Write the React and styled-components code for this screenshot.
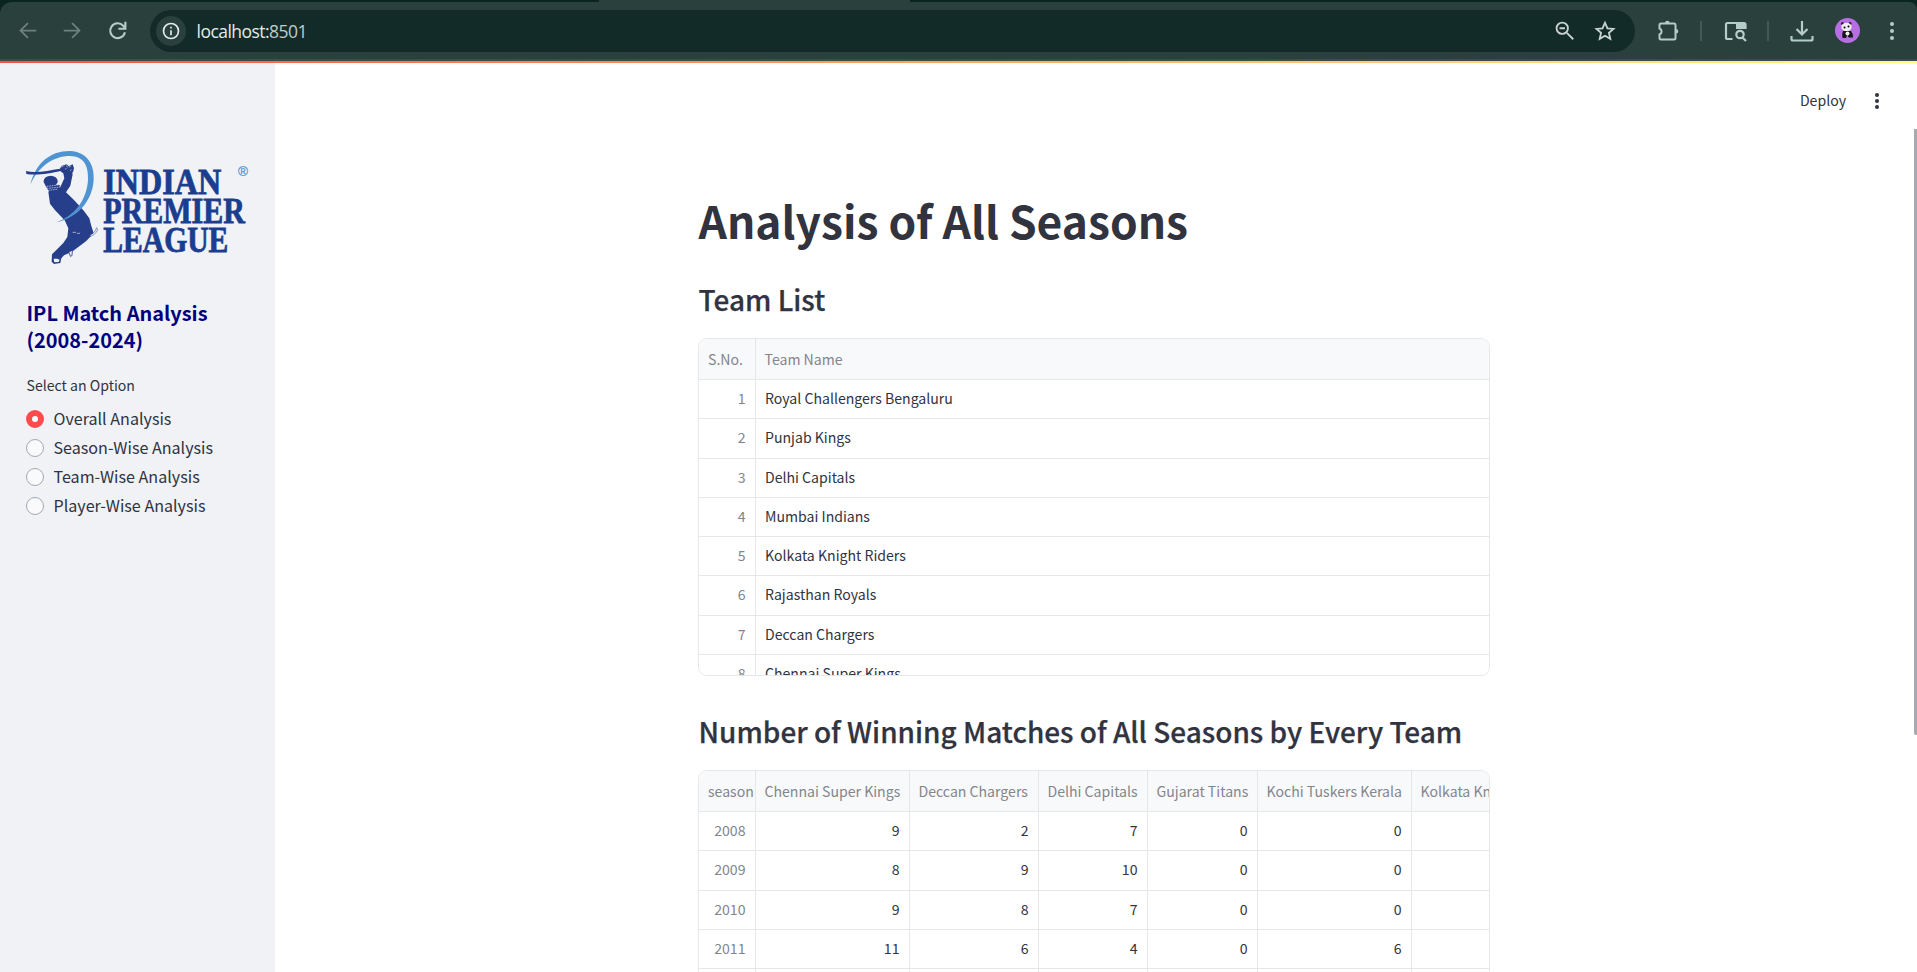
import React from "react";
import styled, { createGlobalStyle } from "styled-components";

const Global = createGlobalStyle`
  * { box-sizing: border-box; }
  html, body { margin: 0; padding: 0; overflow: hidden; background: #fff; }
  body { font-family: "Noto Sans CJK SC", "Noto Sans", sans-serif; color: #31333f; }
`;

const Window = styled.div`
  display: flex;
  flex-direction: column;
  width: 1917px;
  height: 972px;
  overflow: hidden;
`;

const BrowserChrome = styled.header`
  flex: none;
  height: 61px;
  background: #0a2520;
  display: flex;
  flex-direction: column;
  align-items: flex-start;
`;
const ActiveTab = styled.div`
  width: 311px;
  height: 2px;
  margin-left: 599px;
  background: #29403c;
`;
const Toolbar = styled.div`
  width: 100%;
  height: 59px;
  background: #29403c;
  border-bottom: 2px solid #3d4d49;
  border-radius: 12px 8px 0 0;
  display: flex;
  align-items: center;
  padding: 0 17px 0 17px;
`;
const NavButtons = styled.div`
  display: flex;
  gap: 24px;
  width: 133px;
  height: 42px;
  align-items: center;
`;
const AddressBar = styled.div`
  width: 1485px;
  height: 42px;
  border-radius: 21px;
  background: #122b28;
  display: flex;
  align-items: center;
  padding: 0 19px 0 6px;
`;
const SiteInfo = styled.div`
  width: 30px;
  height: 30px;
  border-radius: 50%;
  background: #29403c;
  display: grid;
  place-items: center;
`;
const Url = styled.span`
  flex: 1;
  margin-left: 10.5px;
  font: 400 17.5px/24px "Open Sans", sans-serif;
  letter-spacing: -0.53px;
  color: #e3eae7;
  & > em { font-style: normal; color: #c0cdc9; }
`;
const AddressActions = styled.div`
  display: flex;
  gap: 18px;
`;
const Extensions = styled.div`
  flex: 1;
  display: flex;
  align-items: center;
  padding-left: 21px;
`;
const Divider = styled.i`
  width: 2px;
  height: 20px;
  background: #425a55;
  margin: 0 21px 0 20px;
`;
const Avatar = styled.div`
  width: 25px;
  height: 25px;
  border-radius: 50%;
  background: #b66ee3;
  overflow: hidden;
  margin: 0 29.5px 0 20.5px;
  flex: none;
`;

const Decoration = styled.div`
  flex: none;
  height: 2px;
  background: linear-gradient(90deg, #ff4b4b, #fffd80);
`;

const AppBody = styled.div`
  flex: 1;
  display: flex;
  min-height: 0;
`;

const Sidebar = styled.aside`
  flex: none;
  width: 275px;
  background: #f0f2f6;
  padding: 86px 20px 0 26px;
`;
const SidebarTitle = styled.h3`
  margin: 34px 0 0 0.5px;
  font-size: 19.95px;
  line-height: 27px;
  font-weight: 700;
  color: #000080;
`;
const FieldLabel = styled.div`
  margin: 21px 0 0 0.5px;
  font-size: 14.1px;
  line-height: 22px;
`;
const RadioGroup = styled.div`
  display: flex;
  flex-direction: column;
  margin-top: 8.4px;
`;
const RadioRow = styled.label`
  display: flex;
  align-items: center;
  gap: 9.5px;
  height: 28.9px;
  font-size: 16.1px;
  line-height: 28px;
  white-space: nowrap;
`;
const RadioText = styled.span`
  padding-bottom: 1px;
`;
const RadioDot = styled.span`
  width: 18px;
  height: 18px;
  border-radius: 50%;
  background: ${(p) => (p.$on ? "#fff" : "#fafafc")};
  border: ${(p) => (p.$on ? "6px solid #ff4b4b" : "1px solid #a3a8b0")};
`;

const Main = styled.main`
  flex: 1;
  display: flex;
  flex-direction: column;
  min-width: 0;
`;
const AppHeader = styled.div`
  flex: none;
  height: 66px;
  display: flex;
  justify-content: flex-end;
  align-items: center;
  gap: 21px;
  padding: 9px 30px 0 0;
  font-size: 14.1px;
`;
const DeployLabel = styled.span`
  padding-bottom: 2px;
`;
const ScrollRow = styled.div`
  flex: 1;
  min-height: 0;
  display: flex;
  justify-content: space-between;
`;
const Content = styled.div`
  width: 792px;
  margin-left: 423px;
  padding-top: 59px;
`;
const ScrollThumb = styled.div`
  width: 3px;
  height: 606px;
  background: #a9aab0;
  border-bottom-left-radius: 2px;
`;
const PageTitle = styled.h1`
  margin: 0 0 0 0.5px;
  font-size: 44.35px;
  line-height: 64px;
  font-weight: 700;
  white-space: nowrap;
`;
const SectionTitle = styled.h2`
  margin: ${(p) => p.$top}px 0 0 0.6px;
  font-size: 27.97px;
  line-height: 40px;
  font-weight: 500;
  -webkit-text-stroke: 0.25px #31333f;
  white-space: nowrap;
`;
const Frame = styled.div`
  margin-top: ${(p) => p.$top}px;
  height: 338px;
  border: 1px solid #e6e7e9;
  border-radius: 9px;
  overflow: hidden;
  font-size: 14.1px;
`;
const GridRow = styled.div`
  display: grid;
  grid-template-columns: ${(p) => p.$cols};
  height: ${(p) => (p.$head ? "41px" : "39.27px")};
  background: ${(p) => (p.$head ? "#f8f9fb" : "#fff")};
  width: max-content;
`;
const Cell = styled.div`
  border-right: 1px solid #e6e7e9;
  border-bottom: 1px solid #e6e7e9;
  padding: ${(p) => (p.$head ? "0 0 0 8.5px" : "0 9.5px 2.300px 9px")};
  display: flex;
  align-items: center;
  justify-content: ${(p) => (p.$num ? "flex-end" : "flex-start")};
  color: ${(p) => (p.$muted ? "#83858d" : "#31333f")};
  white-space: nowrap;
  overflow: hidden;
  &:first-child { padding-left: 9px; }
`;

const Icon = ({ size = 24, children, color = "#b3cdc7", w = 2 }) => (
  <svg width={size} height={size} viewBox="0 0 24 24" fill="none" stroke={color} strokeWidth={w}>
    {children}
  </svg>
);

const Logo = () => (
  <svg width="228" height="116" viewBox="26 149 228 116" style={{ display: "block" }}>
    <g transform="translate(20 145) scale(.33333)">
      <g fill="#273f8a">
        <path d="M85 140L121 126L133 100L129 80L153 74L158 88L151 122L138 142L162 165L192 198L208 220L214 243L221 265L198 289L158 319L146 325L132 331L124 340L121 354L102 357L95 350L96 328L112 312L130 294L142 276L145 250L134 226L104 194L90 176Z" />
        <ellipse cx="92" cy="109" rx="21" ry="17" />
        <path d="M74 118l46 2-6 18-26 4z" />
      </g>
      <path d="M31 119C48 50 95 17 150 18c52 2 74 42 71 87-4 65-51 115-113 127 57-20 92-67 96-127 2-45-14-71-54-72-50 0-95 32-119 86z" fill="#4f93d2" />
      <path d="M18 78c30 7 66-1 102-7l4-8 16-5 6 6 12-6 4 12-3 12-12 7-20-6-6-5C92 85 50 92 19 87z" fill="#273f8a" />
      <path d="M124 66l9-3M135 73l8-5M147 66l8-2M138 62l5 3M150 77l6-4M80 124l36-4M80 130l36-3M84 136l27-3" fill="none" stroke="#dfe4f0" strokeWidth="2" strokeDasharray="5 2.500" />
      <path d="M158 262h10M171 265h9" stroke="#dfe4f0" strokeWidth="2" />
      <path d="M210 270c10-4 17-11 20-22l3 6c-4 10-12 17-21 20z" fill="#f0f2f6" stroke="#273f8a" strokeWidth="1.500" />
      <path d="M101 341l2 11 13-1 3-7-7-3z" fill="#f0f2f6" />
      <path d="M147 322l4 12 5-2 1-15" fill="#f0f2f6" stroke="#273f8a" strokeWidth="2.500" />
    </g>
    <g fill="#1b3d8f" stroke="#1b3d8f" strokeWidth=".8" fontFamily="Liberation Serif, serif" fontWeight="700" fontSize="35">
      <text x="103.300" y="194" textLength="118" lengthAdjust="spacingAndGlyphs">INDIAN</text>
      <text x="103.300" y="223" textLength="141.500" lengthAdjust="spacingAndGlyphs">PREMIER</text>
      <text x="103.300" y="252.200" textLength="125" lengthAdjust="spacingAndGlyphs">LEAGUE</text>
    </g>
    <text x="238" y="175.500" fontSize="13.500" fill="#4f93d2" stroke="#4f93d2" strokeWidth=".2" fontFamily="Liberation Sans, sans-serif">®</text>
  </svg>
);

const teams = [
  "Royal Challengers Bengaluru",
  "Punjab Kings",
  "Delhi Capitals",
  "Mumbai Indians",
  "Kolkata Knight Riders",
  "Rajasthan Royals",
  "Deccan Chargers",
  "Chennai Super Kings",
];
const heads = ["season", "Chennai Super Kings", "Deccan Chargers", "Delhi Capitals", "Gujarat Titans", "Kochi Tuskers Kerala", "Kolkata Knight Riders"];
const wins = [
  [2008, 9, 2, 7, 0, 0, 6],
  [2009, 8, 9, 10, 0, 0, 3],
  [2010, 9, 8, 7, 0, 0, 7],
  [2011, 11, 6, 4, 0, 6, 8],
  [2012, 10, 4, 11, 0, 0, 12],
];
const options = ["Overall Analysis", "Season-Wise Analysis", "Team-Wise Analysis", "Player-Wise Analysis"];
const teamCols = "57px 734px";
const winCols = "57px 154px 129px 109px 110px 154px 160px";

export default function App() {
  return (
    <Window>
      <Global />
      <BrowserChrome>
        <ActiveTab />
        <Toolbar>
          <NavButtons>
            <Icon size={21} color="#6d827d"><path d="M22 12H4M12.500 3.500L4 12l8.500 8.500" /></Icon>
            <Icon size={21} color="#6d827d"><path d="M2 12h18M11.500 3.500L20 12l-8.500 8.500" /></Icon>
            <Icon size={21} w={2.4}><path d="M20.500 14A8.500 8.500 0 1 1 18.500 6.500L20.500 9M21 2v8h-8" /></Icon>
          </NavButtons>
          <AddressBar>
            <SiteInfo>
              <Icon size={20} color="#e3eae7"><circle cx="12" cy="12" r="9" /><path d="M12 11v6M12 7v2" /></Icon>
            </SiteInfo>
            <Url>localhost:<em>8501</em></Url>
            <AddressActions>
              <Icon size={22} color="#c9d3d0"><circle cx="9" cy="9" r="6.200" /><path d="M14 14l7 7M6 9h6" /></Icon>
              <Icon size={22} color="#c9d3d0"><path d="M12 3l2.700 6.100 6.600.6-5 4.400 1.500 6.500L12 17.200l-5.800 3.400 1.500-6.500-5-4.400 6.600-.6z" /></Icon>
            </AddressActions>
          </AddressBar>
          <Extensions>
            <Icon size={24}><path d="M5 4.500h13q1.500 0 1.500 1.500v13q0 1.500-1.500 1.500H5Q3.500 20.500 3.500 19v-3.500a3.200 3.200 0 0 0 0-6V6Q3.500 4.500 5 4.500z" /><path d="M9 4a2.300 2.300 0 0 1 4.600 0zM20 10a2.300 2.300 0 0 1 0 4.600z" fill="#b3cdc7" stroke="none" /></Icon>
            <Divider />
            <Icon size={24} w={2.2}><path d="M9.500 20H4.500Q3 20 3 18.500v-13Q3 4 4.500 4H21q1.500 0 1.500 1.500V10" /><path d="M13 4h9v6h-9z" fill="#b3cdc7" stroke="none" /><circle cx="17" cy="15.500" r="3.700" /><path d="M19.500 18.500l3.500 3.500" /></Icon>
            <Divider />
            <Icon size={24} w={2.2}><path d="M12 2v13M6.500 10l5.500 5.500 5.500-5.500M1.500 17v3q0 1.500 1.500 1.500h18Q22.500 21.500 22.500 20v-3" /></Icon>
            <Avatar>
              <svg width="25" height="25" viewBox="0 0 25 25">
                <circle cx="7.500" cy="5.500" r="1.500" fill="#222" /><circle cx="15" cy="5.500" r="1.500" fill="#222" />
                <ellipse cx="11.500" cy="9" rx="5.200" ry="4.200" fill="#eee" />
                <path d="M8 13h8q2 2 2 6.500h-4.500l-1-3-1.500 3.500H7.500Q6.500 16 8 13z" fill="#161616" />
                <circle cx="12.500" cy="15.500" r="2" fill="#eee" /><circle cx="9.500" cy="9.500" r="1" /><circle cx="13.500" cy="8.500" r="1" />
              </svg>
            </Avatar>
            <svg width="6" height="20" fill="#b3cdc7"><circle cx="3" cy="3" r="2" /><circle cx="3" cy="10" r="2" /><circle cx="3" cy="17" r="2" /></svg>
          </Extensions>
        </Toolbar>
      </BrowserChrome>
      <Decoration />
      <AppBody>
        <Sidebar>
          <Logo />
          <SidebarTitle>IPL Match Analysis<br />(2008-2024)</SidebarTitle>
          <FieldLabel>Select an Option</FieldLabel>
          <RadioGroup>
            {options.map((o, i) => (
              <RadioRow key={o}><RadioDot $on={i === 0} /><RadioText>{o}</RadioText></RadioRow>
            ))}
          </RadioGroup>
        </Sidebar>
        <Main>
          <AppHeader>
            <DeployLabel>Deploy</DeployLabel>
            <svg width="20" height="20" fill="#31333f"><circle cx="10" cy="4" r="2" /><circle cx="10" cy="10" r="2" /><circle cx="10" cy="16" r="2" /></svg>
          </AppHeader>
          <ScrollRow>
            <Content>
              <PageTitle>Analysis of All Seasons</PageTitle>
              <SectionTitle $top={27}>Team List</SectionTitle>
              <Frame $top={19}>
                <GridRow $cols={teamCols} $head><Cell $head $muted>S.No.</Cell><Cell $head $muted>Team Name</Cell></GridRow>
                {teams.map((t, i) => (
                  <GridRow key={t} $cols={teamCols}><Cell $num $muted>{i + 1}</Cell><Cell>{t}</Cell></GridRow>
                ))}
              </Frame>
              <SectionTitle $top={35}>Number of Winning Matches of All Seasons by Every Team</SectionTitle>
              <Frame $top={19}>
                <GridRow $cols={winCols} $head>{heads.map((h) => <Cell key={h} $head $muted>{h}</Cell>)}</GridRow>
                {wins.map((r) => (
                  <GridRow key={r[0]} $cols={winCols}>{r.map((v, i) => <Cell key={i} $num $muted={i === 0}>{v}</Cell>)}</GridRow>
                ))}
              </Frame>
            </Content>
            <ScrollThumb />
          </ScrollRow>
        </Main>
      </AppBody>
    </Window>
  );
}
